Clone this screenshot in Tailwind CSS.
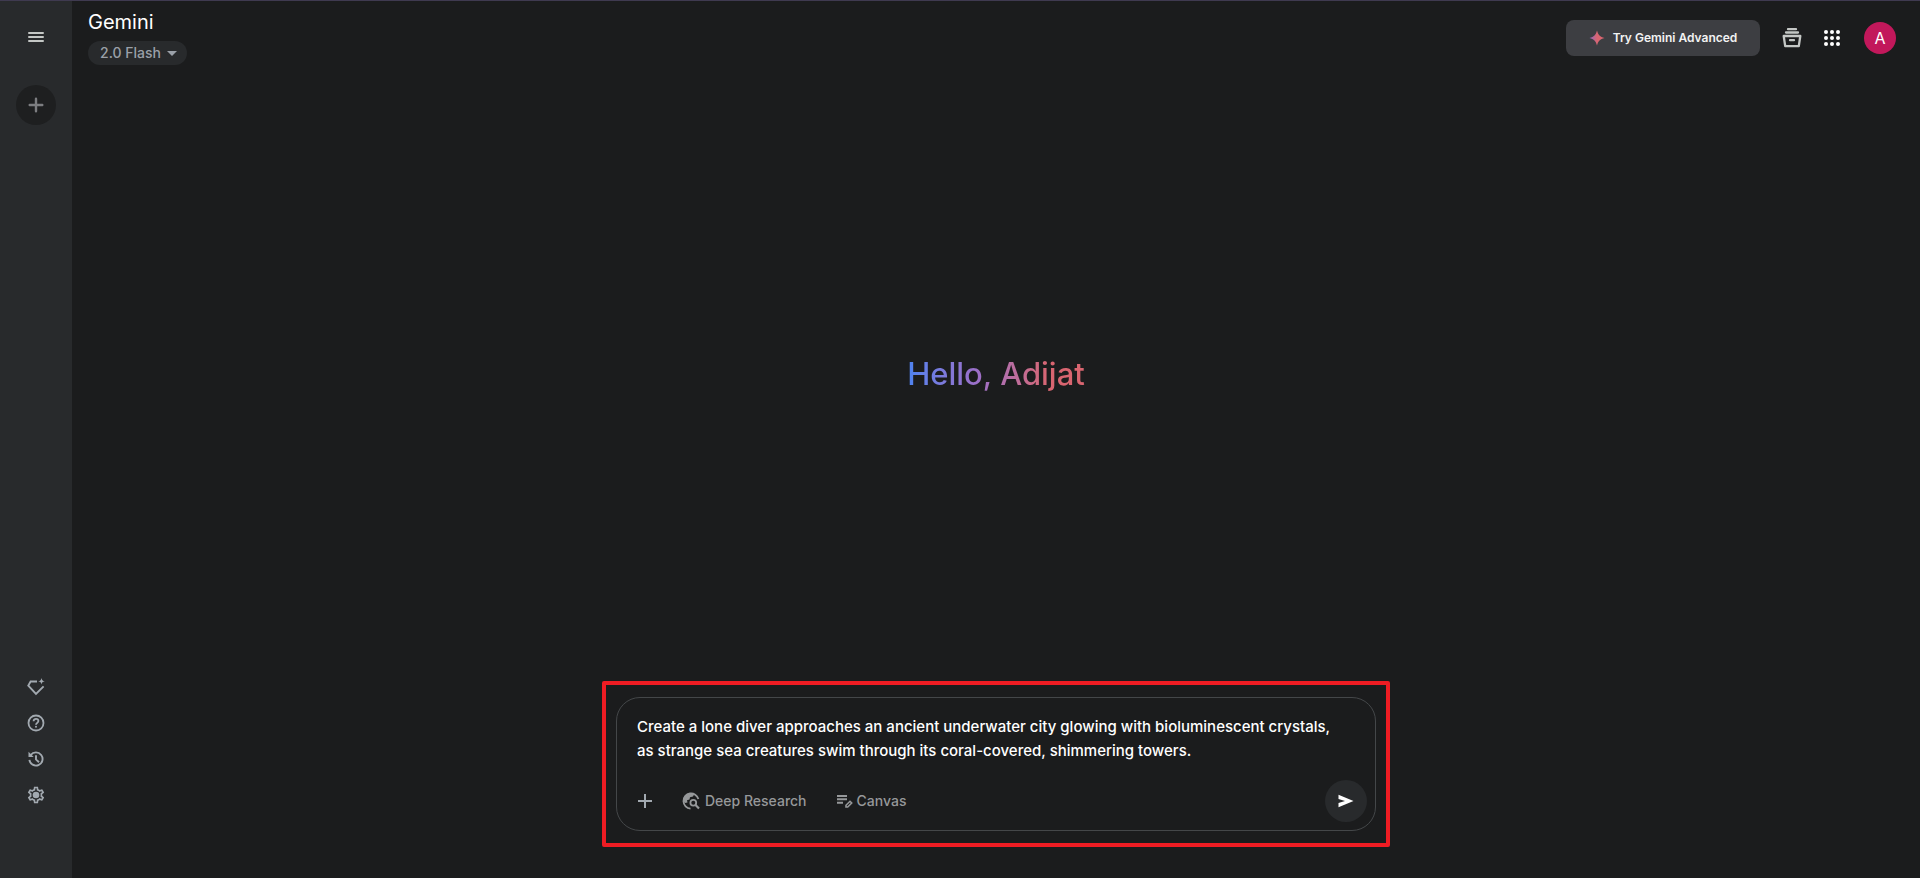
<!DOCTYPE html>
<html lang="en">
<head>
    <meta charset="UTF-8">
    <meta name="viewport" content="width=device-width, initial-scale=1.0">
    <title>Gemini</title>
    <script src="https://cdn.jsdelivr.net/npm/@tailwindcss/browser@4"></script>
</head>
<body class="bg-[#1b1c1d] text-white font-['Inter','Roboto',sans-serif]">
    <div class="flex min-h-screen border-t border-[#3f3a50]">
        <!-- Sidebar -->
        <nav class="w-18 shrink-0 flex flex-col items-center justify-between bg-[#282a2c] pt-4 pb-[65px] text-[#a2a9b0]">
            <div class="flex flex-col items-center gap-7">
                <button type="button" aria-label="Main menu" class="size-10 flex items-center justify-center text-[#c4c7c5]">
                    <svg class="size-5" viewBox="0 0 20 20" fill="none" stroke="currentColor" stroke-width="2" stroke-linecap="round">
                        <path d="M3 6h14M3 10h14M3 14h14"/>
                    </svg>
                </button>
                <button type="button" aria-label="New chat" class="size-10 flex items-center justify-center rounded-full bg-[#1e1f20] text-[#7c7d80]">
                    <svg class="size-5" viewBox="0 0 20 20" fill="none" stroke="currentColor" stroke-width="2.4" stroke-linecap="round">
                        <path d="M10 3.700v12.600M3.700 10h12.600"/>
                    </svg>
                </button>
            </div>
            <div class="flex flex-col items-center">
                <button type="button" aria-label="Gem manager" class="size-9 flex items-center justify-center">
                    <svg class="size-5" viewBox="0 0 20 20" fill="none">
                        <path d="M11 4.500H4.600L2.300 8.600 10 17l7.600-7.600" stroke="currentColor" stroke-width="1.900"/>
                        <path d="M15.500 1c.4 2.200 1 2.800 3.300 3.300-2.300.5-2.900 1-3.300 3.300-.4-2.300-1-2.800-3.300-3.300 2.300-.5 2.900-1.100 3.300-3.300z" fill="currentColor"/>
                    </svg>
                </button>
                <button type="button" aria-label="Help" class="size-9 flex items-center justify-center">
                    <svg class="size-5" viewBox="0 0 20 20" fill="none" stroke="currentColor" stroke-width="1.800">
                        <circle cx="10" cy="10" r="7.500"/>
                        <path d="M7.600 8.200c0-1.400 1.100-2.300 2.400-2.300s2.400.9 2.400 2.200c0 1.700-2.400 1.900-2.400 3.700"/>
                        <circle cx="10" cy="13.800" r="1" fill="currentColor" stroke="none"/>
                    </svg>
                </button>
                <button type="button" aria-label="Activity" class="size-9 flex items-center justify-center">
                    <svg class="size-5" viewBox="0 0 20 20" fill="none" stroke="currentColor" stroke-width="1.900">
                        <path d="M3.400 10.800a6.600 6.600 0 1 0 1.300-4.800M10 6.200v4.200l3 2.800"/>
                        <path d="M2.500 2.800v5.200h5.200z" fill="currentColor" stroke="none"/>
                    </svg>
                </button>
                <button type="button" aria-label="Settings" class="size-9 flex items-center justify-center">
                    <svg class="size-5" viewBox="0 0 24 24" fill="currentColor">
                        <path d="M19.430 12.980c.04-.32.07-.64.07-.98 0-.34-.03-.66-.07-.98l2.110-1.650c.19-.15.24-.42.12-.64l-2-3.460c-.09-.16-.26-.25-.44-.25-.06 0-.12.01-.17.03l-2.490 1c-.52-.4-1.080-.73-1.690-.98l-.38-2.650C14.460 2.180 14.250 2 14 2h-4c-.25 0-.46.18-.49.42l-.38 2.650c-.61.25-1.170.59-1.690.98l-2.490-1c-.06-.02-.12-.03-.18-.03-.17 0-.34.09-.43.25l-2 3.460c-.13.22-.07.49.12.64l2.110 1.650c-.04.32-.07.65-.07.98 0 .33.03.66.07.98l-2.110 1.650c-.19.15-.24.42-.12.64l2 3.460c.09.16.26.25.44.25.06 0 .12-.01.17-.03l2.490-1c.52.4 1.080.73 1.690.98l.38 2.650c.03.24.24.42.49.42h4c.25 0 .46-.18.49-.42l.38-2.650c.61-.25 1.170-.59 1.690-.98l2.490 1c.06.02.12.03.18.03.17 0 .34-.09.43-.25l2-3.460c.12-.22.07-.49-.12-.64l-2.110-1.650zm-1.980-1.710c.04.31.05.52.05.73 0 .21-.02.43-.05.73l-.14 1.130.89.7 1.080.84-.7 1.210-1.270-.51-1.040-.42-.9.68c-.43.32-.84.56-1.250.73l-1.060.43-.16 1.130-.2 1.350h-1.400l-.19-1.350-.16-1.130-1.060-.43c-.43-.18-.83-.41-1.230-.71l-.91-.7-1.060.43-1.270.51-.7-1.210 1.080-.84.89-.7-.14-1.130c-.03-.31-.05-.54-.05-.74s.02-.43.05-.73l.14-1.130-.89-.7-1.080-.84.7-1.210 1.270.51 1.040.42.9-.68c.43-.32.84-.56 1.250-.73l1.060-.43.16-1.130.2-1.350h1.390l.19 1.350.16 1.130 1.060.43c.43.18.83.41 1.230.71l.91.7 1.060-.43 1.270-.51.7 1.210-1.070.85-.89.7.14 1.130z"/>
                        <circle cx="12" cy="12" r="4"/>
                    </svg>
                </button>
            </div>
        </nav>

        <div class="flex-1 flex flex-col">
            <!-- Header -->
            <header class="flex justify-between items-start pl-4 pr-6 pt-2">
                <div class="flex flex-col items-start gap-[6px]">
                    <h1 class="text-xl leading-[26px]">Gemini</h1>
                    <button type="button" class="h-6 flex items-center gap-[6px] rounded-full bg-[#282a2c] pl-3 pr-[10px] text-sm font-medium text-[#9aa0a8]">
                        2.0 Flash
                        <svg class="w-[10px] h-[5px]" viewBox="0 0 10 5" fill="currentColor"><path d="M0 0h10L5 5z"/></svg>
                    </button>
                </div>
                <div class="flex items-center pt-[11px]">
                    <button type="button" class="h-9 w-[194px] flex items-center justify-center gap-2 rounded-lg bg-[#3d3e42] text-xs font-semibold text-[#f2f2f2]">
                        <svg class="size-4" viewBox="0 0 16 16">
                            <defs>
                                <linearGradient id="spark" x1="0" y1="0" x2="1" y2="0">
                                    <stop offset="0" stop-color="#9168c0"/>
                                    <stop offset=".5" stop-color="#d96570"/>
                                    <stop offset="1" stop-color="#d96570"/>
                                </linearGradient>
                            </defs>
                            <path d="M8 .5c1.200 4.500 3 6.300 7.500 7.500-4.500 1.200-6.300 3-7.500 7.500-1.200-4.500-3-6.300-7.500-7.500C5 6.800 6.800 5 8 .5z" fill="url(#spark)"/>
                        </svg>
                        Try Gemini Advanced
                    </button>
                    <a href="#" aria-label="Archive" class="ml-5 size-6 flex items-center justify-center text-[#c4c7c5]">
                        <svg class="size-5" viewBox="0 0 20 20" fill="none" stroke="currentColor" stroke-width="2.300" stroke-linecap="round" stroke-linejoin="round">
                            <path d="M6 1.200h8M4 4.500h12M1.700 8h16.600l-1.500 10.200H3.200zM8 12.200h4"/>
                        </svg>
                    </a>
                    <a href="#" aria-label="Google apps" class="ml-4 size-6 flex items-center justify-center">
                        <svg class="size-4" viewBox="0 0 16 16" fill="currentColor">
                            <circle cx="2" cy="2" r="2"/><circle cx="8" cy="2" r="2"/><circle cx="14" cy="2" r="2"/>
                            <circle cx="2" cy="8" r="2"/><circle cx="8" cy="8" r="2"/><circle cx="14" cy="8" r="2"/>
                            <circle cx="2" cy="14" r="2"/><circle cx="8" cy="14" r="2"/><circle cx="14" cy="14" r="2"/>
                        </svg>
                    </a>
                    <a href="#" aria-label="Account" class="ml-5 size-8 flex items-center justify-center rounded-full bg-[#c2185b] text-base">A</a>
                </div>
            </header>

            <!-- Greeting -->
            <main class="flex-1 flex items-center justify-center pt-0.5">
                <h2 class="bg-linear-to-r from-[#4b82f0] via-[#9d6fc8] via-40% to-[#d96570] to-80% bg-clip-text text-[31px] leading-10 font-medium text-transparent">Hello, Adijat</h2>
            </main>

            <!-- Prompt box -->
            <div class="self-center w-full max-w-[788px] mb-[31px] rounded-xs border-4 border-[#ee1c23] py-3 px-[10px]">
                <form class="rounded-[24px] border border-[#444749] pt-[17px] pb-2 pl-5 pr-2">
                    <textarea aria-label="Prompt" rows="2" class="block w-full h-12 resize-none overflow-hidden text-[15px] leading-6 font-medium outline-none">Create a lone diver approaches an ancient underwater city glowing with bioluminescent crystals,
as strange sea creatures swim through its coral-covered, shimmering towers.</textarea>
                    <div class="mt-[17px] flex items-center text-sm font-medium text-[#96989a]">
                        <button type="button" aria-label="Add files" class="text-[#a2a9b0]">
                            <svg class="size-4" viewBox="0 0 16 16" fill="none" stroke="currentColor" stroke-width="2"><path d="M8 1v14M1 8h14"/></svg>
                        </button>
                        <button type="button" class="ml-7 flex items-center gap-1">
                            <svg class="size-5" viewBox="0 0 20 20" fill="none" stroke="currentColor" stroke-width="1.800">
                                <path d="M17.400 8A7.600 7.600 0 1 0 9.500 17.600"/>
                                <path d="M2 9.500C2.500 5 5.800 2 10 2l3.500.8-1.500 2.700-3 .7-.5 2.300-2.500.7.5 2.300-2.500.5z" fill="currentColor" stroke="none"/>
                                <circle cx="12.300" cy="11.800" r="2.900"/>
                                <path d="M14.300 13.800l3.700 3.700" stroke-width="2.200"/>
                            </svg>
                            Deep Research
                        </button>
                        <button type="button" class="ml-[30px] flex items-center gap-1">
                            <svg class="size-4" viewBox="0 0 16 16" fill="none" stroke="currentColor" stroke-width="2">
                                <path d="M0 3h10M0 6.300h10M0 9.700h6"/>
                                <path d="M9 14v-1.700l4-4 1.700 1.700-4 4z" stroke-width="1.600"/>
                            </svg>
                            Canvas
                        </button>
                        <button type="submit" aria-label="Send message" class="ml-auto size-[42px] flex items-center justify-center rounded-full bg-[#282a2c] text-white">
                            <svg class="size-4" viewBox="0 0 16 16" fill="currentColor"><path d="M.5 1.800L15.500 8 .5 14.200V10L7 8 .5 6z"/></svg>
                        </button>
                    </div>
                </form>
            </div>
        </div>
    </div>
</body>
</html>
